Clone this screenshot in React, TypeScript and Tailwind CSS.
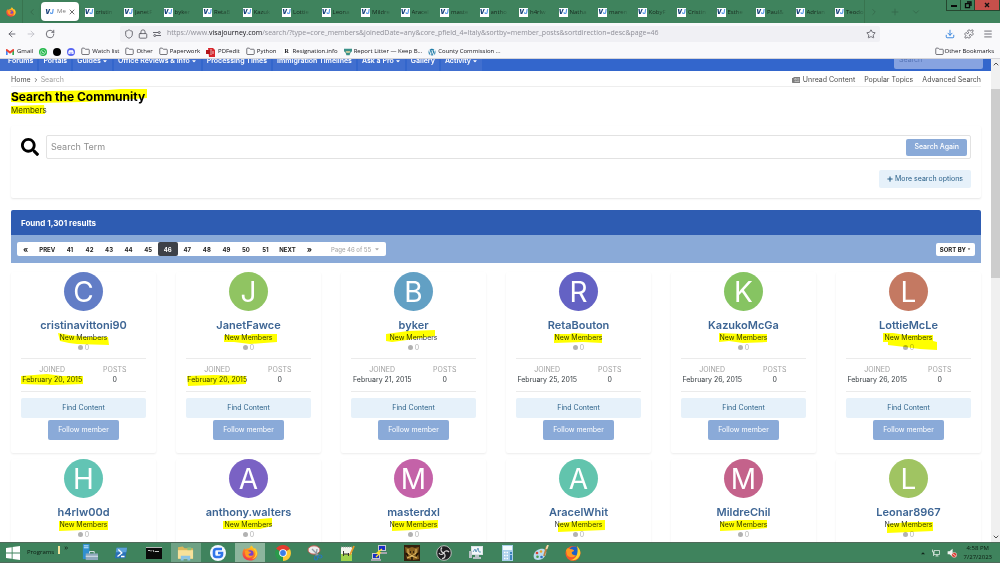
import React from 'react';
import {
  ArrowLeft,
  ArrowRight,
  ChevronDown,
  ChevronLeft,
  ChevronRight,
  ChevronUp,
  Download,
  Folder,
  Lock,
  Menu,
  Plus,
  Puzzle,
  RotateCw,
  Shield,
  Star,
  X,
} from 'lucide-react';
import { FaCaretDown, FaDiscord, FaPlus, FaSearch, FaWhatsapp, FaWordpress } from 'react-icons/fa';

interface Member {
  name: string;
  color: string;
  joined: string;
  mark: string;
  dateMark?: string;
}

const tabs = [
  'cristin', 'JanetF', 'byker', 'RetaB', 'Kazuk', 'Lottie', 'Leona', 'Mildre', 'Aracel', 'maste',
  'antho', 'h4rlw', 'Natha', 'maren', 'KobyF', 'Cristin', 'Esthe', 'Paul&', 'Adrian', 'Teodo',
];

const navItems = [
  { label: 'Forums' },
  { label: 'Portals' },
  { label: 'Guides', menu: true },
  { label: 'Office Reviews & Info', menu: true },
  { label: 'Processing Times' },
  { label: 'Immigration Timelines' },
  { label: 'Ask a Pro', menu: true },
  { label: 'Gallery' },
  { label: 'Activity', menu: true },
];

const pages = ['41', '42', '43', '44', '45', '46', '47', '48', '49', '50', '51'];

// mark / dateMark are highlighter strokes, in pixels from the centre of the text
const members: Member[] = [
  { name: 'cristinavittoni90', color: '#627dc6', joined: 'February 20, 2015', mark: '-25,-5 -14,-3 3,-1 25,-1 26,7 -6,6 -14,5 -23,3', dateMark: '-31,-4 -5,-6 10,-4 31,-4 31,4 0,5 -31,4' },
  { name: 'JanetFawce', color: '#90c462', joined: 'February 20, 2015', mark: '-24,-3 2,-3 4,-4 29,-4 29,4 2,6 -14,4 -24,4', dateMark: '-30,-4 -3,-5 29,-4 29,4 -3,5 -29,6' },
  { name: 'byker', color: '#62a0c4', joined: 'February 21, 2015', mark: '-27,-4 -5,-7 22,-8 22,-2 -6,2 -21,4 -27,3' },
  { name: 'RetaBouton', color: '#6462c4', joined: 'February 25, 2015', mark: '-24,-4 -8,-4 -5,-5 10,-4 24,-4 24,5 5,4 -24,5' },
  { name: 'KazukoMcGa', color: '#86c462', joined: 'February 26, 2015', mark: '-24,-5 0,-4 24,-4 24,4 0,5 -14,3 -24,4' },
  { name: 'LottieMcLe', color: '#c47962', joined: 'February 26, 2015', mark: '-25,-5 -15,-5 -3,-3 25,-3 25,3 29,4 29,12 12,11 -3,9 -20,7 -20,4 -25,4' },
  { name: 'h4rlw00d', color: '#62c4b4', joined: 'February 26, 2015', mark: '-24,-4 25,-4 25,5 0,5 -24,6' },
  { name: 'anthony.walters', color: '#7a62c4', joined: 'February 26, 2015', mark: '-25,-4 0,-5 24,-7 24,1 12,4 -14,4 -25,4' },
  { name: 'masterdxl', color: '#c462a8', joined: 'February 26, 2015', mark: '-21,-4 3,-4 25,-5 25,3 0,5 -21,6' },
  { name: 'AracelWhit', color: '#62c4ad', joined: 'February 26, 2015', mark: '-20,-2 2,-4 27,-5 27,5 2,6 -20,7' },
  { name: 'MildreChil', color: '#c4628b', joined: 'February 26, 2015', mark: '-23,-3 -3,-5 24,-5 24,3 0,5 -23,6' },
  { name: 'Leonar8967', color: '#a0c462', joined: 'February 26, 2015', mark: '-21,-1 2,-3 25,-3 25,6 2,7 -21,8' },
];

function Marker({ points }: { points: string }) {
  return (
    <svg
      className="pointer-events-none absolute top-1/2 left-1/2 overflow-visible mix-blend-multiply"
      width="1"
      height="1"
      aria-hidden="true"
    >
      <polygon points={points} fill="#ffff00" />
    </svg>
  );
}

function Favicon() {
  return (
    <span
      aria-hidden="true"
      className="flex size-[9px] shrink-0 items-center justify-center bg-white text-[6px] leading-none font-black italic font-[Inter,sans-serif]"
    >
      <span className="text-[#173f78]">V</span>
      <span className="text-[#5b9bea]">J</span>
    </span>
  );
}

function Firefox({ className }: { className?: string }) {
  return (
    <svg viewBox="0 0 32 32" className={className} aria-hidden="true">
      <defs>
        <linearGradient id="ffBody" x1="0.8" y1="0" x2="0.3" y2="1">
          <stop offset="0" stopColor="#ffe226" />
          <stop offset="0.45" stopColor="#ff8a1e" />
          <stop offset="1" stopColor="#f0304f" />
        </linearGradient>
      </defs>
      <path d="M18 1c4 2 5 5 5 6 2 0 3-1 3-1 4 4 5 8 5 11 0 8-6 14-15 14S1 25 1 17c0-5 2-8 4-11l1 4c1-2 3-3 5-3 3 0 6-2 7-6z" fill="url(#ffBody)" />
      <circle cx="16.500" cy="17" r="6.500" fill="#7a42c8" />
      <path d="M6 12c3-2 6-1 8 1l4 1c0 3-4 3-5 4 0 4 6 5 9 2-1 6-12 8-15 1-1-3-1-6-1-9z" fill="#ff9a1f" />
      <path d="M19 3c4 4 9 8 8 15 0 4-3 8-7 10 8-1 11-7 10-13-1-5-6-7-11-12z" fill="#ffd52e" />
    </svg>
  );
}

function OutlineFolder() {
  return <Folder className="size-[9px] shrink-0 text-[#4a4a52]" strokeWidth={2} aria-hidden="true" />;
}

function WindowControls() {
  return (
    <div className="flex h-[11px] self-start border-x border-b border-[#25472f]">
      <button aria-label="Minimize" className="flex w-[14px] items-center justify-center border-r border-[#25472f]">
        <svg viewBox="0 0 8 8" className="size-2"><path d="M1 4h6v2H1z" fill="#0a0a0a" /></svg>
      </button>
      <button aria-label="Restore" className="flex w-[14px] items-center justify-center border-r border-[#25472f]">
        <svg viewBox="0 0 8 8" className="size-2"><path d="M3 1h4v4M1.500 2.700h4v4h-4z" fill="none" stroke="#0a0a0a" strokeWidth="1.300" /></svg>
      </button>
      <button aria-label="Close" className="flex w-[24px] items-center justify-center bg-[#c6504b]">
        <svg viewBox="0 0 8 8" className="size-2"><path d="M2 2l4 4M6 2l-4 4" stroke="#111" strokeWidth="1.400" /></svg>
      </button>
    </div>
  );
}

function TabBar() {
  return (
    <div className="flex h-[23px] shrink-0 bg-[#3f835d] text-[#16271c]">
      <div className="flex w-[23px] items-center justify-center border-r border-[#38744f]">
        <Firefox className="size-2.5" />
      </div>
      <button aria-label="Scroll tabs left" className="flex w-[18px] items-center justify-center text-[#35694b]">
        <ChevronLeft className="size-2.5" />
      </button>
      <div
        role="tablist"
        aria-label="Open tabs"
        className="grid min-w-0 flex-1 grid-cols-[repeat(20,minmax(0,1fr))_33px] border-r border-[#38744f]"
      >
        <div className="my-0.5 mr-0.5 flex items-center rounded-sm bg-white pr-[3px] pl-1 shadow">
          <button role="tab" aria-selected="true" className="flex flex-1 items-center gap-[3px]">
            <Favicon />
            <span className="text-[#777]">Me</span>
          </button>
          <button aria-label="Close tab"><X className="size-2 text-[#222]" /></button>
        </div>
        {tabs.map((tab) => (
          <button key={tab} role="tab" aria-selected="false" className="flex items-center gap-0.5 pt-px pl-1">
            <Favicon />
            <span className="[mask-image:linear-gradient(to_right,black_50%,rgba(0,0,0,0.2))]">{tab}</span>
          </button>
        ))}
      </div>
      <div className="flex w-[81px] items-center gap-[11px] pl-1 text-[#35694b]">
        <button aria-label="Scroll tabs right"><ChevronRight className="size-2.5" /></button>
        <button aria-label="New tab"><Plus className="size-2.5" /></button>
        <button aria-label="List all tabs"><ChevronDown className="size-2.5" /></button>
      </div>
      <WindowControls />
    </div>
  );
}

function Toolbar() {
  return (
    <div className="flex h-5 shrink-0 items-center bg-[#f9f9fb] pt-px text-[#55555e]">
      <div className="flex w-[120px] items-center gap-[9px] pl-[7px]">
        <button aria-label="Back"><ArrowLeft className="size-2.5" /></button>
        <button aria-label="Forward" className="text-[#bdbdc4]"><ArrowRight className="size-2.5" /></button>
        <button aria-label="Reload"><RotateCw className="size-2.5" /></button>
      </div>
      <div className="flex h-4 flex-1 items-center rounded-xs bg-[#f0f0f4] px-1">
        <Shield className="size-2.5" />
        <Lock className="ml-1 size-2.5" />
        <svg viewBox="0 0 16 12" className="ml-[5px] h-1.5 w-2" fill="none" stroke="currentColor" strokeWidth="1.800" aria-hidden="true">
          <path d="M0 3h10M6 9h10" />
          <circle cx="12.500" cy="3" r="2" />
          <circle cx="3.500" cy="9" r="2" />
        </svg>
        <div className="ml-1.5 flex-1 text-[7px] whitespace-nowrap text-[#8f8f98]">
          https://www.<span className="text-[#15141a]">visajourney.com</span>
          /search/?type=core_members&amp;joinedDate=any&amp;core_pfield_4=Italy&amp;sortby=member_posts&amp;sortdirection=desc&amp;page=46
        </div>
        <button aria-label="Bookmark this page"><Star className="size-2.5" /></button>
      </div>
      <div className="flex w-[120px] items-center justify-end gap-[9px] pr-[7px]">
        <button aria-label="Downloads"><Download className="size-2.5 text-[#1a73d9]" /></button>
        <button aria-label="Extensions"><Puzzle className="size-2.5" /></button>
        <button aria-label="Menu"><Menu className="size-2.5" /></button>
      </div>
    </div>
  );
}

function BookmarksBar() {
  const item = 'flex items-center gap-0.5 whitespace-nowrap';
  return (
    <nav aria-label="Bookmarks" className="flex h-4 shrink-0 items-center gap-1.5 border-b border-[#d5d5da] bg-[#f9f9fb] px-1.5 pt-0.5 text-[#15141a]">
      <a href="#gmail" className="flex items-center gap-[3px]">
        <svg viewBox="0 0 24 18" className="h-1.5 w-2" aria-hidden="true">
          <path d="M0 2v16h5V7z" fill="#4285f4" />
          <path d="M24 2v16h-5V7z" fill="#34a853" />
          <path d="M0 2c0-2 2-3 4-1l8 6 8-6c2-2 4-1 4 1v3l-12 9L0 5z" fill="#ea4335" />
        </svg>
        Gmail
      </a>
      <a href="#whatsapp" aria-label="WhatsApp" className="flex size-2 items-center justify-center rounded-full bg-[#25b84c] text-white"><FaWhatsapp className="size-1.5" /></a>
      <a href="#dark" aria-label="Dark site" className="size-2 rounded-full bg-black" />
      <a href="#discord" aria-label="Discord" className="flex size-2 items-center justify-center rounded-full bg-[#5865f2] text-white"><FaDiscord className="size-1.5" /></a>
      <a href="#watch" className={item}><OutlineFolder />Watch list</a>
      <a href="#other" className={item}><OutlineFolder />Other</a>
      <a href="#paperwork" className={item}><OutlineFolder />Paperwork</a>
      <a href="#pdf" className={item}>
        <svg viewBox="0 0 10 10" className="size-2.5" aria-hidden="true">
          <path d="M2 1h5l2 2v7H3z" fill="#d8262c" />
          <path d="M0 3h6v4H0z" fill="#b3141a" />
          <path d="M5 2v6M7 4v3" stroke="#fff" strokeWidth="0.700" />
        </svg>
        PDFedit
      </a>
      <a href="#python" className={item}><OutlineFolder />Python</a>
      <a href="#resignation" className={item}>
        <span aria-hidden="true" className="flex size-2 items-center justify-center bg-white font-[Liberation_Serif,serif] text-[6px] font-bold">R</span>
        Resignation.info
      </a>
      <a href="#litter" className={item}>
        <svg viewBox="0 0 10 10" className="size-2" aria-hidden="true">
          <path d="M0 1h10v3L8 6 7 9H3L2 6 0 4z" fill="#3a9188" />
          <path d="M2 4h6L7 6H3z" fill="#e8d9a0" />
        </svg>
        Report Litter — Keep B...
      </a>
      <a href="#county" className={item}>
        <FaWordpress className="size-2 text-[#1f7ca8]" aria-hidden="true" />
        County Commission ...
      </a>
      <a href="#bookmarks" className="ml-auto flex items-center gap-px whitespace-nowrap"><OutlineFolder />Other Bookmarks</a>
    </nav>
  );
}

function SiteHeader() {
  return (
    <header className="flex h-3 shrink-0 items-end overflow-hidden bg-[#3366cc]">
      <nav aria-label="Site" className="flex gap-0.5 text-[7px] font-semibold text-white">
        {navItems.map((item) => (
          <a key={item.label} href="#nav" className="flex h-5 items-center gap-px bg-[#416fcf] px-1 whitespace-nowrap first:pl-2">
            {item.label}
            {item.menu && <FaCaretDown className="size-1.5" />}
          </a>
        ))}
      </nav>
      <input
        type="text"
        aria-label="Search the site"
        placeholder="Search"
        className="mr-2 mb-0.5 ml-auto h-5 w-[89px] rounded-xs bg-[#87a3e0] px-[5px] text-[7px] text-white placeholder:text-[#5574b5]"
      />
    </header>
  );
}

function Breadcrumb() {
  return (
    <div className="flex h-4 items-center border-b border-[#eeeeee] pt-[3px] text-[7px] text-[#4d4d4d]">
      <nav aria-label="Breadcrumb" className="flex items-center gap-0.5">
        <a href="#home">Home</a>
        <ChevronRight className="size-1.5" strokeWidth={3} />
        <span className="text-[#a0a0a0]">Search</span>
      </nav>
      <div className="ml-auto flex items-center gap-[9px]">
        <a href="#unread" className="flex items-center gap-[3px]">
          <svg viewBox="0 0 16 12" className="h-1.5 w-2" aria-hidden="true">
            <path d="M3 0h13v12H1.500A1.500 1.500 0 0 1 0 10.500V2h3z" fill="#7d7d7d" />
            <path d="M5.500 3h3v3h-3zM10.500 3.500h4M10.500 6h4M5 9h9.500" fill="none" stroke="#fff" strokeWidth="0.900" />
          </svg>
          Unread Content
        </a>
        <a href="#popular">Popular Topics</a>
        <a href="#advanced">Advanced Search</a>
      </div>
    </div>
  );
}

function SearchPanel() {
  return (
    <form className="mt-[11px] rounded-xs px-2.5 pt-[9px] pb-2.5 shadow-[0_1px_2px_rgba(0,0,0,0.1)]" onSubmit={(e) => e.preventDefault()}>
      <div className="flex items-center">
        <FaSearch className="size-[18px] text-black" aria-hidden="true" />
        <div className="ml-[7px] flex h-6 flex-1 items-center rounded-xs border border-[#e2e2e2] pr-[3px] pl-1">
          <input
            type="search"
            aria-label="Search term"
            placeholder="Search Term"
            className="min-w-0 flex-1 text-[9px] outline-none placeholder:text-[#8e8e8e]"
          />
          <button type="submit" className="h-[17px] rounded-xs bg-[#8aaad8] px-2 pt-px text-[7px] font-medium text-white">Search Again</button>
        </div>
      </div>
      <div className="mt-[11px] flex justify-end">
        <button type="button" className="flex h-[18px] items-center gap-0.5 rounded-xs bg-[#e6f1fa] px-2 text-[7px] text-[#2b6189]">
          <FaPlus className="size-1.5" />More search options
        </button>
      </div>
    </form>
  );
}

function Pagination() {
  return (
    <div className="flex h-7 items-center bg-[#8aaad8] px-1.5">
      <nav aria-label="Pagination" className="flex h-3.5 items-center rounded-xs bg-white text-[6px] font-bold text-[#222]">
        <a href="#first" aria-label="First page" className="px-1.5 text-[8px]">«</a>
        <a href="#prev" className="px-[5px]">PREV</a>
        <div className="grid h-full w-[215px] grid-cols-11">
          {pages.map((page) => (
            <a
              key={page}
              href={`#page-${page}`}
              aria-current={page === '46' ? 'page' : undefined}
              className={page === '46'
                ? 'flex items-center justify-center rounded-xs bg-[#3d4148] text-white'
                : 'flex items-center justify-center'}
            >
              {page}
            </a>
          ))}
        </div>
        <a href="#next" className="px-1">NEXT</a>
        <a href="#last" aria-label="Last page" className="px-[7px] text-[8px]">»</a>
        <button className="ml-1.5 flex items-center gap-[3px] px-1.5 font-medium text-[#aaaaaa]">
          Page 46 of 55 <FaCaretDown className="size-1.5" />
        </button>
      </nav>
      <button className="ml-auto flex h-[13px] items-center gap-px rounded-xs bg-white px-1 text-[6px] font-bold text-[#222]">
        SORT BY <FaCaretDown className="size-1" />
      </button>
    </div>
  );
}

function MemberCard({ member }: { member: Member }) {
  return (
    <li className="flex flex-col items-center rounded-xs px-2.5 pb-[13px] shadow-[0_1px_2px_rgba(0,0,0,0.08)]">
      <a
        href="#profile"
        aria-label={`${member.name} profile`}
        className="flex size-[39px] items-center justify-center rounded-full text-[28px] leading-none text-white"
        style={{ backgroundColor: member.color }}
      >
        {member.name[0].toUpperCase()}
      </a>
      <h3 className="mt-1.5 text-[11px] leading-4 font-semibold whitespace-nowrap text-[#3d6594]">
        <a href="#profile">{member.name}</a>
      </h3>
      <p className="relative text-[7px] leading-[9px] text-[#353c41]">
        New Members
        <Marker points={member.mark} />
      </p>
      <p className="flex items-center gap-0.5 text-[7px] leading-[11px] text-[#b2b2b2]">
        <span className="size-[5px] rounded-full bg-[#b2b2b2]" />0
      </p>
      <dl className="mt-[5px] grid w-full grid-cols-2 border-y border-[#ebebeb] py-1.5 text-center text-[7px] leading-2.5">
        <div>
          <dt className="text-[#a0a0a0]">JOINED</dt>
          <dd className="relative whitespace-nowrap text-[#353c41]">
            {member.joined}
            {member.dateMark && <Marker points={member.dateMark} />}
          </dd>
        </div>
        <div>
          <dt className="text-[#a0a0a0]">POSTS</dt>
          <dd className="text-[#353c41]">0</dd>
        </div>
      </dl>
      <button className="mt-1.5 h-5 w-full rounded-xs bg-[#e6f1fa] pt-px text-[7px] text-[#2b6189]">Find Content</button>
      <button className="mt-0.5 h-5 rounded-xs bg-[#8aaad8] px-2.5 pt-px text-[7px] text-white">Follow member</button>
    </li>
  );
}

function Scrollbar() {
  return (
    <div aria-hidden="true" className="flex w-[9px] shrink-0 flex-col items-center bg-[#f0f0f0] text-[#505050]">
      <ChevronUp className="mt-px size-2" strokeWidth={3} />
      <div className="mt-[21px] h-[189px] w-full bg-[#cdcdcd]" />
      <ChevronDown className="mt-auto mb-px size-2" strokeWidth={3} />
    </div>
  );
}

const taskIcons: { name: string; tile?: string; icon: React.ReactNode }[] = [
  {
    name: 'Server Manager',
    icon: (
      <svg viewBox="0 0 18 18" className="size-[17px]">
        <path d="M2 0h7v16H2z" fill="#2f8fd0" /><path d="M3 2h5M3 4h5" stroke="#d7efff" />
        <path d="M5 10h13v7H5z" fill="#8fa9bd" /><path d="M9 10V8h5v2M5 13h13" fill="none" stroke="#dfe8ee" />
      </svg>
    ),
  },
  {
    name: 'PowerShell',
    icon: (
      <svg viewBox="0 0 16 16" className="size-3.5">
        <path d="M3 2h12l-2 12H1z" fill="#2a71b8" /><path d="M3 2h12l-1 5H2z" fill="#5ba1d8" />
        <path d="M5 4l4 4-5 4M8 12h4" fill="none" stroke="#fff" strokeWidth="1.500" />
      </svg>
    ),
  },
  {
    name: 'Command Prompt',
    icon: (
      <svg viewBox="0 0 16 12" className="h-3 w-4">
        <path d="M0 0h16v12H0z" fill="#0a0a0a" /><path d="M0 0h16v1H0z" fill="#b8b8b8" />
        <path d="M2 3.500h2M5 3v1.500M7 3l1 2M9 4.500h4" stroke="#e0e0e0" strokeWidth="0.900" />
      </svg>
    ),
  },
  {
    name: 'File Explorer',
    tile: 'bg-[#6ea285]',
    icon: (
      <svg viewBox="0 0 18 16" className="h-4 w-[17px]">
        <path d="M1 2l5-1 2 2h9v11H1z" fill="#d9b85c" /><path d="M1 5h16v9H1z" fill="#f7e19a" />
        <path d="M11 2h4v3h-4z" fill="#8bc27b" /><path d="M4 16v-5h10v5h-3v-2H7v2z" fill="#8ac4e6" />
      </svg>
    ),
  },
  {
    name: 'Backup',
    icon: (
      <svg viewBox="0 0 16 16" className="size-4">
        <circle cx="8" cy="8" r="8" fill="#f4f8ff" />
        <path d="M12 4H6.500A2.500 2.500 0 0 0 4 6.500v3A2.500 2.500 0 0 0 6.500 12h3A2.500 2.500 0 0 0 12 9.500V8H8" fill="none" stroke="#2f74ea" strokeWidth="2.600" />
      </svg>
    ),
  },
  { name: 'Firefox', tile: 'bg-[#8db59d]', icon: <Firefox className="size-4" /> },
  {
    name: 'Chrome',
    icon: (
      <svg viewBox="0 0 16 16" className="size-4">
        <path d="M8 8L1.100 4A8 8 0 0 1 14.900 4z" fill="#e33b2e" />
        <path d="M8 8l6.900-4A8 8 0 0 1 8 16z" fill="#fcc934" />
        <path d="M8 8v8A8 8 0 0 1 1.100 4z" fill="#2a9a4b" />
        <circle cx="8" cy="8" r="3.800" fill="#fff" /><circle cx="8" cy="8" r="2.900" fill="#3b7de9" />
      </svg>
    ),
  },
  {
    name: 'Snipping Tool',
    icon: (
      <svg viewBox="0 0 16 16" className="size-4">
        <ellipse cx="7" cy="5" rx="6" ry="4.200" fill="#ececec" stroke="#c8504a" strokeWidth="0.900" />
        <path d="M5 4l7 7M10 4l-1 7" stroke="#8d99a3" strokeWidth="1.300" />
        <ellipse cx="9" cy="13" rx="1.600" ry="2" fill="none" stroke="#2a78b8" strokeWidth="1.200" />
        <ellipse cx="13" cy="11.500" rx="2" ry="1.500" fill="none" stroke="#2a78b8" strokeWidth="1.200" />
      </svg>
    ),
  },
  {
    name: 'Notepad++',
    icon: (
      <svg viewBox="0 0 16 16" className="size-4">
        <path d="M2 2h11v14H2z" fill="#f1f4ec" /><path d="M2 9h11v7H2z" fill="#9ed24d" />
        <path d="M4.500 6v5M5 9h4M9.500 8v3" stroke="#333" strokeWidth="1" />
        <path d="M15 1l-4 9" stroke="#e89a2a" strokeWidth="1.800" /><path d="M2 2h11" stroke="#999" strokeDasharray="1 1" />
      </svg>
    ),
  },
  {
    name: 'PuTTY',
    icon: (
      <svg viewBox="0 0 16 16" className="size-4">
        <path d="M7 0h8v6H7zM1 8h8v6H1z" fill="#c9c9d2" /><path d="M8 1h6v4H8zM2 9h6v4H2z" fill="#1a2fc4" />
        <path d="M8 7h8v2H8zM0 14h10v2H0z" fill="#a5a5ae" /><path d="M11 4L6 8l3 0-4 4" fill="none" stroke="#ffe42a" strokeWidth="1.300" />
      </svg>
    ),
  },
  {
    name: 'Game',
    icon: (
      <svg viewBox="0 0 16 16" className="size-4">
        <path d="M0 0h16v16H0z" fill="#33200d" />
        <path d="M1 2l4 1 3-1 3 1 4-1-1 6 1 6-6 1-6-1-1-5z" fill="#8a6220" />
        <path d="M4 4v4l4 3 4-3V4M3 13l5-2 5 2" fill="none" stroke="#e4c06a" strokeWidth="1" />
        <path d="M6 7h1M9 7h1M8 12v3M2 8l2 3M14 8l-2 3" stroke="#1b1006" strokeWidth="1.500" />
      </svg>
    ),
  },
  {
    name: 'OBS Studio',
    icon: (
      <svg viewBox="0 0 16 16" className="size-4">
        <circle cx="8" cy="8" r="7.300" fill="#1f1f22" stroke="#c9c9c9" strokeWidth="0.900" />
        <path d="M6 2.500c-2 2-1 5 2 5.500M13 7c-2-2-5-1-5 1M6 13.500c3 0 4-3 2-5.500M3 8c1 2 3 2 5 0" fill="none" stroke="#d9d9d9" strokeWidth="1.200" />
      </svg>
    ),
  },
  {
    name: 'Resource Monitor',
    icon: (
      <svg viewBox="0 0 16 16" className="size-4">
        <path d="M3 1h12v9H3z" fill="#dce3e6" /><path d="M4 2h10v7H4z" fill="#f4f8fa" />
        <path d="M5 7l2-3 1 3 2-4 1 4h2" fill="none" stroke="#5790b5" strokeWidth="0.900" />
        <path d="M1 6h3v7H1zM7 10h4v2H7zM5 12h8v2H5z" fill="#b7c1c5" />
      </svg>
    ),
  },
  {
    name: 'Calculator',
    icon: (
      <svg viewBox="0 0 14 16" className="h-4 w-3.5">
        <path d="M1 0h11v16H1z" fill="#a9cfea" /><path d="M2 1h9v4H2z" fill="#f2fafe" />
        <path d="M3 7.500h5M3 10.500h5M3 13.500h5" stroke="#fff" strokeWidth="1.600" strokeDasharray="1.500 1" />
        <path d="M9 7h2v2H9zM9 10h2v5H9z" fill="#3b83bd" />
      </svg>
    ),
  },
  {
    name: 'Paint',
    icon: (
      <svg viewBox="0 0 16 16" className="size-4">
        <path d="M7 4c5-1 7 2 6 5s-4 6-8 6-5-3-4-6 3-4 6-5z" fill="#b9dcf0" />
        <circle cx="4" cy="8" r="1.300" fill="#d64232" /><circle cx="8" cy="6.500" r="1.300" fill="#e8a62c" />
        <circle cx="4.500" cy="11.800" r="1.300" fill="#4a9d48" /><circle cx="8.500" cy="12" r="1.300" fill="#3370be" />
        <path d="M14 1l-3 10" stroke="#c08142" strokeWidth="1.800" /><path d="M15 0l-1.500 4" stroke="#f4dcae" strokeWidth="1.800" />
      </svg>
    ),
  },
  {
    name: 'Firefox classic',
    icon: (
      <svg viewBox="0 0 16 16" className="size-4">
        <circle cx="8" cy="8.500" r="7.500" fill="#f5582a" /><circle cx="9" cy="6.500" r="5" fill="#1d60c4" />
        <path d="M1 5l2-2 2 1c3 0 4 1 4 2L7 7c-1 1 1 4 4 3-1 3-7 3-9 0z" fill="#ff9a1f" />
        <path d="M12 1c3 3 4 6 3 9-2 5-7 6-10 5 6 0 9-7 7-14z" fill="#ffd42b" />
      </svg>
    ),
  },
];

function Taskbar() {
  return (
    <footer className="flex h-[21px] shrink-0 items-stretch border-y border-[#4f6a5a] bg-[#3f835d] text-[#0b1a10]">
      <button aria-label="Start" className="flex w-[26px] items-center justify-center">
        <svg viewBox="0 0 16 16" className="size-3.5" fill="#fff">
          <path d="M0 2.300l6.500-1v6.200H0zM7.500 1.200L16 0v7.500H7.500zM0 8.500h6.500v6.200l-6.500-1zM7.500 8.500H16V16l-8.500-1.200z" />
        </svg>
      </button>
      <div className="flex w-[47px] items-center gap-1 pl-px">
        <span>Programs</span>
        <span className="mt-[3px] h-2 w-0.5 self-start bg-[#f3e39a]" />
        <span className="self-start text-[8px] leading-2">»</span>
      </div>
      <div className="grid w-[516px] grid-cols-16">
        {taskIcons.map(({ name, tile, icon }) => (
          <button key={name} aria-label={name} className="flex items-center justify-center">
            {tile ? <span className={`flex h-full w-[30px] items-center justify-center ${tile}`}>{icon}</span> : icon}
          </button>
        ))}
      </div>
      <div className="ml-auto flex items-center gap-[7px] pr-2">
        <svg viewBox="0 0 6 4" className="h-1 w-1" aria-hidden="true"><path d="M0 4l3-3 3 3z" fill="#10241a" /></svg>
        <svg viewBox="0 0 16 16" className="size-2" aria-hidden="true">
          <path d="M4 3h11v8H4zM7 14h6M10 11v3M1 1v5h4M3 6v8" fill="none" stroke="#e6efe9" strokeWidth="1.500" />
        </svg>
        <svg viewBox="0 0 16 16" className="size-2.5" aria-hidden="true">
          <path d="M1 5h3l5-4v13L4 10H1z" fill="#eef3ef" />
          <circle cx="11.500" cy="11" r="4" fill="#d9342b" stroke="#fff" strokeWidth="0.800" />
          <path d="M9 9l5 4" stroke="#fff" strokeWidth="1.200" />
        </svg>
        <div className="text-center leading-[9px]">
          <div>4:58 PM</div>
          <div>7/27/2023</div>
        </div>
      </div>
    </footer>
  );
}

const App: React.FC = () => {
  return (
    <div className="flex h-screen flex-col overflow-hidden bg-white font-['Open_Sans','Noto_Sans',sans-serif] text-[6px]">
      <TabBar />
      <Toolbar />
      <BookmarksBar />
      <div className="flex min-h-0 flex-1">
        <div className="flex min-w-0 flex-1 flex-col overflow-hidden font-[Inter,sans-serif]">
          <SiteHeader />
          <main className="pr-2.5 pl-[11px]">
            <Breadcrumb />
            <h1 className="relative mt-0.5 w-fit text-[12px] leading-4 font-bold text-black">
              Search the Community
              <Marker points="-67,-4 -28,-6 30,-7 42,-8 69,-8 69,1 42,3 5,5 -45,6 -67,5" />
            </h1>
            <p className="relative w-fit text-[8px] leading-[10px] text-[#353c41]">
              Members
              <Marker points="-18,-4 15,-5 16,4 -18,4" />
            </p>
            <SearchPanel />
            <section className="mt-3">
              <h2 className="flex h-[25px] items-center rounded-t-xs bg-[#2e5cb2] px-2.5 text-[8px] font-bold text-white">
                Found 1,301 results
              </h2>
              <Pagination />
              <ul className="mt-[9px] grid grid-cols-6 gap-x-5 gap-y-1.5">
                {members.map((member) => (
                  <MemberCard key={member.name} member={member} />
                ))}
              </ul>
            </section>
          </main>
        </div>
        <Scrollbar />
      </div>
      <Taskbar />
    </div>
  );
};

export default App;
